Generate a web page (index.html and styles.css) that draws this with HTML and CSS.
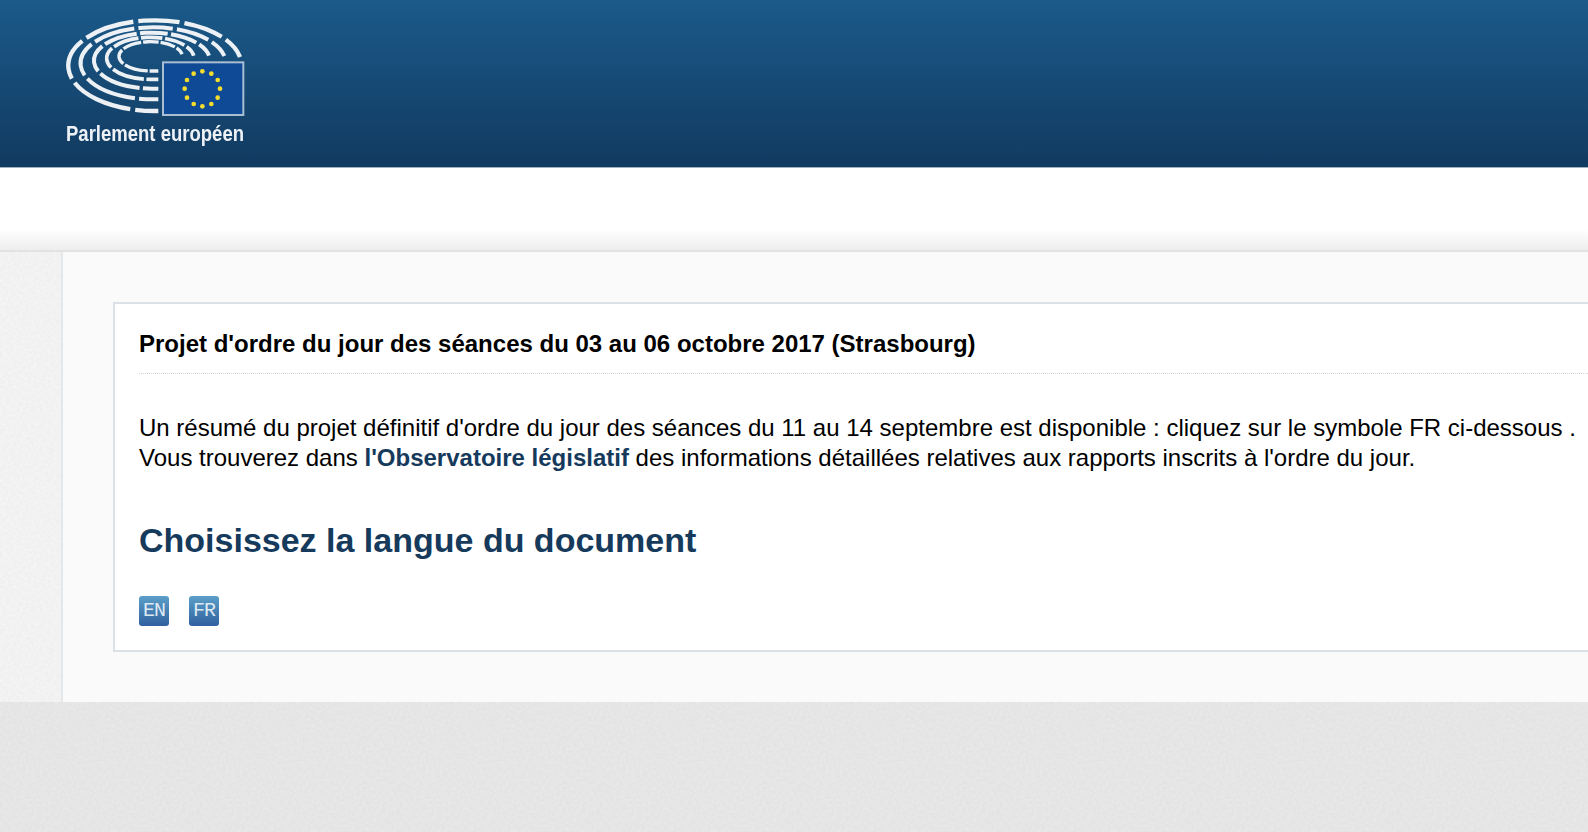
FILE: index.html
```html
<!DOCTYPE html>
<html lang="fr">
<head>
  <meta charset="UTF-8">
  <title>Parlement européen</title>
  <link rel="stylesheet" href="styles.css">
</head>
<body>
  <div class="page">
    <header class="top-bar">
      <svg class="logo" width="300" height="168" viewBox="0 0 900 504">
        <g class="seats">
          <path class="row-1" pathLength="100" d="M325 333 H315 A260 136 0 1 1 570 171"/>
          <path class="row-2" pathLength="100" d="M325 298 H310 A218 108 0 1 1 523 168"/>
          <path class="row-3" pathLength="100" d="M325 266 H306 A174 84 0 1 1 477 167"/>
          <path class="row-4" pathLength="100" d="M325 238 H301 A131 63 0 1 1 431 167"/>
          <path class="row-5" pathLength="100" d="M325 213 H302 A95 44 0 1 1 396 163"/>
        </g>
        <rect class="flag" x="339" y="187" width="241" height="158"/>
        <g class="stars">
          <circle cx="457" cy="214" r="7"/>
          <circle cx="484" cy="221" r="7"/>
          <circle cx="503" cy="240" r="7"/>
          <circle cx="510" cy="266" r="7"/>
          <circle cx="503" cy="293" r="7"/>
          <circle cx="484" cy="312" r="7"/>
          <circle cx="457" cy="319" r="7"/>
          <circle cx="431" cy="312" r="7"/>
          <circle cx="411" cy="293" r="7"/>
          <circle cx="404" cy="266" r="7"/>
          <circle cx="411" cy="240" r="7"/>
          <circle cx="431" cy="221" r="7"/>
        </g>
        <text class="logo-name" x="48" y="423" textLength="534" lengthAdjust="spacingAndGlyphs">Parlement européen</text>
      </svg>
    </header>

    <div class="sub-bar"></div>

    <div class="content-wrap">
      <main class="panel">
        <section class="box">
          <h1 class="doc-title">Projet d'ordre du jour des séances du 03 au 06 octobre 2017 (Strasbourg)</h1>
          <p class="intro">
            Un résumé du projet définitif d'ordre du jour des séances du 11 au 14 septembre est disponible : cliquez sur le symbole FR ci-dessous .<br>
            Vous trouverez dans <a href="#">l'Observatoire législatif</a> des informations détaillées relatives aux rapports inscrits à l'ordre du jour.
          </p>
          <h2 class="lang-title">Choisissez la langue du document</h2>
          <div class="lang-list">
            <a class="lang-btn" href="#">EN</a>
            <a class="lang-btn" href="#">FR</a>
          </div>
        </section>
      </main>
    </div>

    <div class="bottom"></div>
  </div>
</body>
</html>
```

FILE: styles.css
```css
html, body {
  margin: 0;
  height: 100%;
  overflow: hidden;
}

body {
  background-color: #e6e6e6;
  color: #000;
  font-family: "Liberation Sans", Arial, sans-serif;
}

.page {
  width: 1800px;
  display: flex;
  flex-direction: column;
}

.top-bar {
  height: 168px;
  box-sizing: border-box;
  padding-left: 50px;
  background: linear-gradient(to bottom, #1b5a8a 0%, #113a60 100%);
  border-bottom: 1px solid #9fb2c2;
}

.logo {
  display: block;
  filter: blur(0.4px);
}

.seats path {
  fill: none;
  stroke: #fff;
  stroke-opacity: 0.92;
  stroke-dasharray: 7.4 1.6 20 1.6 13.8 1.6 15.9 1.6 13.2 1.6 12.7 1.6 7.4;
}

.row-1 { stroke-width: 13; }
.row-2 { stroke-width: 12; }
.row-3 { stroke-width: 12; }
.row-4 { stroke-width: 11; }
.row-5 { stroke-width: 10; }

.flag {
  fill: #0f4a97;
  stroke: #a9bed3;
  stroke-width: 6;
}

.stars circle {
  fill: #f5dd2c;
}

.logo-name {
  font-family: "Liberation Sans Narrow", "Liberation Sans", sans-serif;
  font-weight: bold;
  font-size: 66px;
  fill: #eef2f6;
}

.sub-bar {
  height: 84px;
  box-sizing: border-box;
  background: linear-gradient(to bottom, #fff 0%, #fff 74%, #eeeeee 100%);
  border-bottom: 2px solid #e2e2e2;
}

.content-wrap {
  padding-left: 61px;
  background-color: #ececec;
  background-image: url("data:image/svg+xml,%3Csvg xmlns='http://www.w3.org/2000/svg' width='200' height='200'%3E%3Cfilter id='n'%3E%3CfeTurbulence type='fractalNoise' baseFrequency='0.35' numOctaves='2'/%3E%3CfeColorMatrix values='0 0 0 0 1 0 0 0 0 1 0 0 0 0 1 0.6 0 0 0 0'/%3E%3C/filter%3E%3Crect width='200' height='200' filter='url(%23n)'/%3E%3C/svg%3E");
}

.panel {
  border-left: 2px solid #e3e7ea;
  background-color: #fafafa;
  padding: 50px 0 50px 50px;
}

.box {
  border: 2px solid #dbe1e6;
  background-color: #fff;
  padding: 0 24px 24px;
}

.doc-title {
  margin: 0;
  padding: 25px 0 14px;
  font-size: 24px;
  line-height: 30px;
  font-weight: bold;
  border-bottom: 1px dotted #d4d4d4;
}

.intro {
  margin: 0;
  padding-top: 39px;
  font-size: 24px;
  line-height: 30px;
}

.intro a {
  color: #163a5c;
  font-weight: bold;
  text-decoration: none;
}

.lang-title {
  margin: 0;
  padding-top: 47px;
  font-size: 34px;
  line-height: 40px;
  font-weight: bold;
  color: #163a5c;
}

.lang-list {
  display: flex;
  gap: 20px;
  margin-top: 36px;
}

.lang-btn {
  width: 30px;
  height: 30px;
  border-radius: 3px;
  background: linear-gradient(to bottom, #5b9fc8, #31609f);
  color: #dfe9f2;
  font-family: "Liberation Mono", monospace;
  font-size: 20px;
  letter-spacing: -1px;
  line-height: 30px;
  text-align: center;
  text-decoration: none;
}

.bottom {
  height: 140px;
  background-color: #e0e0e0;
  background-image: url("data:image/svg+xml,%3Csvg xmlns='http://www.w3.org/2000/svg' width='200' height='200'%3E%3Cfilter id='n'%3E%3CfeTurbulence type='fractalNoise' baseFrequency='0.35' numOctaves='2'/%3E%3CfeColorMatrix values='0 0 0 0 1 0 0 0 0 1 0 0 0 0 1 0.35 0 0 0 0'/%3E%3C/filter%3E%3Crect width='200' height='200' filter='url(%23n)'/%3E%3C/svg%3E");
}
```
